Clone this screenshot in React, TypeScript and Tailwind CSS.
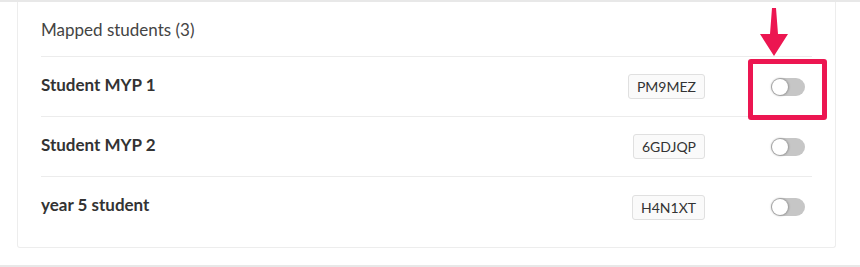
import React from "react";

const students = [
  { name: "Student MYP 1", code: "PM9MEZ" },
  { name: "Student MYP 2", code: "6GDJQP" },
  { name: "year 5 student", code: "H4N1XT" },
];

function Toggle() {
  return (
    <div className="relative w-[34px] h-[18px] rounded-full bg-[#c6c6c6]">
      <div className="absolute left-[1px] top-[1px] w-[16px] h-[16px] rounded-full bg-white shadow-[0_0_2px_1px_rgba(0,0,0,0.25)]" />
    </div>
  );
}

export default function App() {
  return (
    <div className="relative w-[860px] h-[267px] bg-white overflow-hidden" style={{ fontFamily: "Lato, 'Open Sans', sans-serif" }}>
      <div className="h-[2px] bg-[#e8e8e8]" />
      <div className="ml-[17px] mr-[24px] border-x border-b border-[#ededed] rounded-b-[3px] px-[23px] pb-[10px]">
        <div className="h-[55px] flex items-center pt-[2px] border-b border-[#ececec] text-[17px] text-[#444]">
          Mapped students (3)
        </div>
        {students.map((s, i) => (
          <div
            key={s.code}
            className={`h-[60px] flex items-center ${i < students.length - 1 ? "border-b border-[#ececec]" : ""}`}
          >
            <div className="flex-1 text-[17px] font-bold text-[#333] -mt-[4px]">{s.name}</div>
            <div className="h-[25px] px-[8px] flex items-center border border-[#e0e0e0] bg-[#fafafa] rounded-[3px] text-[14px] text-[#333]">
              {s.code}
            </div>
            <div className="ml-[66px] mr-[7px]">
              <Toggle />
            </div>
          </div>
        ))}
      </div>
      <div className="absolute left-0 right-0 bottom-0 h-[2px] bg-[#e8e8e8]" />
      <div className="absolute left-[748px] top-[59px] w-[79px] h-[61px] border-[5px] border-[#ec1651] rounded-[3px]" />
      <svg className="absolute left-[760px] top-[6px]" width="28" height="52" viewBox="0 0 28 52">
        <polygon points="12,2 16,2 18,28 28,28 14,50 0,28 10,28" fill="#ec1651" />
      </svg>
    </div>
  );
}
